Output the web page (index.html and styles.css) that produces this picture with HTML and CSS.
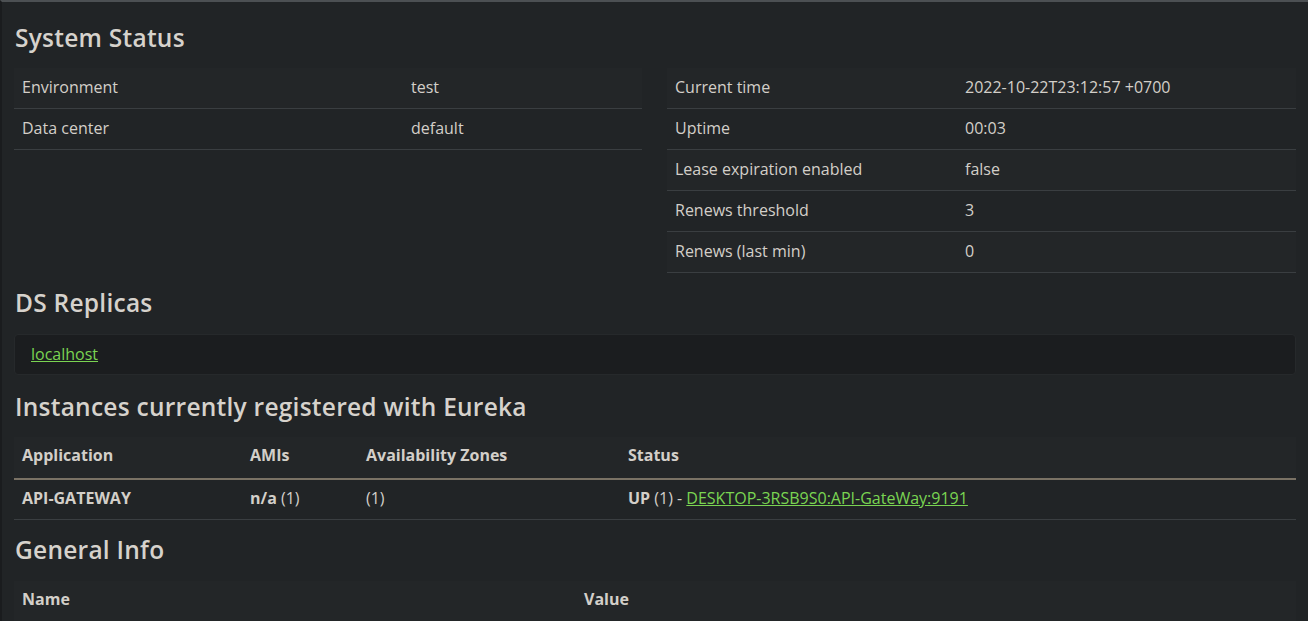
FILE: index.html
```html
<!DOCTYPE html>
<html>
<head>
<meta charset="utf-8">
<link rel="stylesheet" href="styles.css">
</head>
<body>
<div class="page">
  <h2 class="heading h-first">System Status</h2>
  <div class="cols">
    <table class="kv kv-left">
      <tr class="odd"><td class="k">Environment</td><td>test</td></tr>
      <tr><td class="k">Data center</td><td>default</td></tr>
    </table>
    <table class="kv kv-right">
      <tr class="odd"><td class="k">Current time</td><td>2022-10-22T23:12:57 +0700</td></tr>
      <tr><td class="k">Uptime</td><td>00:03</td></tr>
      <tr class="odd"><td class="k">Lease expiration enabled</td><td>false</td></tr>
      <tr><td class="k">Renews threshold</td><td>3</td></tr>
      <tr class="odd"><td class="k">Renews (last min)</td><td>0</td></tr>
    </table>
  </div>

  <h2 class="heading h-ds">DS Replicas</h2>
  <div class="well"><a href="#">localhost</a></div>

  <h2 class="heading h-inst">Instances currently registered with Eureka</h2>
  <table class="grid instances">
    <thead>
      <tr><th class="c1">Application</th><th class="c2">AMIs</th><th class="c3">Availability Zones</th><th>Status</th></tr>
    </thead>
    <tbody>
      <tr><td><b>API-GATEWAY</b></td><td><b>n/a</b> (1)</td><td>(1)</td><td><b>UP</b> (1) - <a href="#">DESKTOP-3RSB9S0:API-GateWay:9191</a></td></tr>
    </tbody>
  </table>

  <h2 class="heading h-gen">General Info</h2>
  <table class="grid general">
    <thead>
      <tr><th class="g1">Name</th><th>Value</th></tr>
    </thead>
  </table>
</div>
</body>
</html>
```

FILE: styles.css
```css
html, body {
  margin: 0;
  padding: 0;
}
body {
  background: #212426;
  color: #d3cfc9;
  font-family: "Open Sans", "Noto Sans", sans-serif;
  font-size: 16px;
  border-top: 2px solid #4c5053;
  border-left: 2px solid #1a1c1e;
  height: 619px;
  overflow: hidden;
}
.page {
  padding: 0 12px 0 12px;
}
.heading {
  font-family: "Open Sans", sans-serif;
  font-weight: 600;
  font-size: 24.5px;
  line-height: 28px;
  color: #d6d2cc;
  margin: 0 0 16px 1px;
  letter-spacing: 0.25px;
}
.h-first { margin-top: 22px; margin-bottom: 16px; }
.h-ds { margin-top: 16px; margin-bottom: 17px; }
.h-inst { margin-top: 18px; margin-bottom: 16px; }
.h-gen { margin-top: 16px; margin-bottom: 17px; }
.cols {
  display: grid;
  grid-template-columns: 628px 629px;
  column-gap: 25px;
  align-items: start;
}
table {
  border-collapse: collapse;
  width: 100%;
}
td, th {
  padding: 0 8px 2px;
  text-align: left;
  vertical-align: middle;
  white-space: nowrap;
}
.kv td {
  height: 38px;
  border-bottom: 1px solid #3a3e41;
}
.kv tr.odd td {
  background: #232628;
}
.kv-left .k { width: 373px; }
.kv-right .k { width: 274px; }
.well {
  background: #1b1d1f;
  border: 1px solid #26292b;
  border-radius: 4px;
  display: flex;
  align-items: center;
  padding-left: 16px;
  box-sizing: border-box;
  height: 41px;
}
.well a { margin-top: -2px; }
a {
  color: #7ad452;
  text-decoration: underline;
}
.grid th {
  background: #232628;
  font-weight: 700;
  height: 36px;
  padding-bottom: 5px;
  border-bottom: 2px solid #7a7265;
}
.grid td {
  height: 36px;
  padding-bottom: 3px;
  border-bottom: 1px solid #3a3e41;
}
.grid b { font-weight: 700; }
.instances .c1 { width: 212px; }
.instances .c2 { width: 100px; }
.instances .c3 { width: 246px; }
.general .g1 { width: 546px; }
.general th { border-bottom: none; }
```
